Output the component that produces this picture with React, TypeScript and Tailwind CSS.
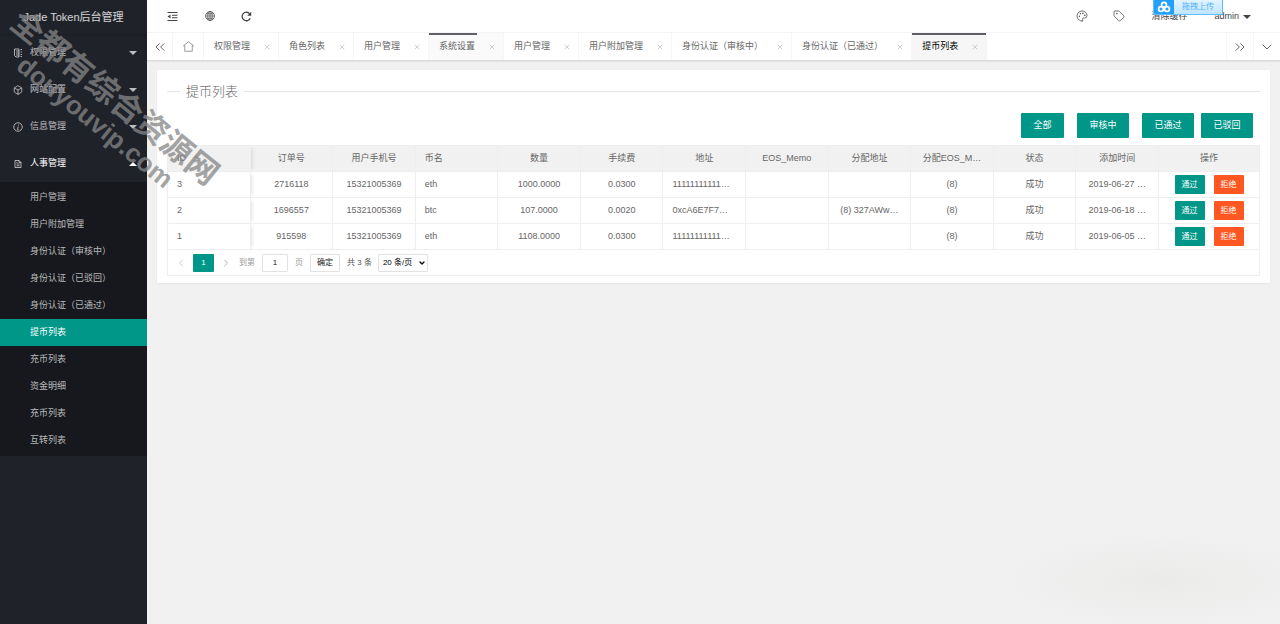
import { ChevronDown, ChevronLeft, ChevronRight, ChevronsLeft, ChevronsRight, Box, Palette, Tag, X } from "lucide-react";
import type { ReactNode } from "react";

interface Tab {
  label: string;
  state?: "hover" | "active";
}

interface Order {
  id: number;
  no: string;
  phone: string;
  coin: string;
  amount: string;
  fee: string;
  address: string;
  assigned: string;
  memo: string;
  time: string;
}

const TABS: Tab[] = [
  { label: "权限管理" },
  { label: "角色列表" },
  { label: "用户管理" },
  { label: "系统设置", state: "hover" },
  { label: "用户管理" },
  { label: "用户附加管理" },
  { label: "身份认证（审核中）" },
  { label: "身份认证（已通过）" },
  { label: "提币列表", state: "active" },
];

const SUBMENU = [
  "用户管理",
  "用户附加管理",
  "身份认证（审核中）",
  "身份认证（已驳回）",
  "身份认证（已通过）",
  "提币列表",
  "充币列表",
  "资金明细",
  "充币列表",
  "互转列表",
];
const CURRENT = 5;

const COLUMNS = ["订单号", "用户手机号", "币名", "数量", "手续费", "地址", "EOS_Memo", "分配地址", "分配EOS_M…", "状态", "添加时间"];

const ORDERS: Order[] = [
  { id: 3, no: "2716118", phone: "15321005369", coin: "eth", amount: "1000.0000", fee: "0.0300", address: "11111111111…", assigned: "", memo: "(8)", time: "2019-06-27 …" },
  { id: 2, no: "1696557", phone: "15321005369", coin: "btc", amount: "107.0000", fee: "0.0020", address: "0xcA6E7F7…", assigned: "(8) 327AWw…", memo: "(8)", time: "2019-06-18 …" },
  { id: 1, no: "915598", phone: "15321005369", coin: "eth", amount: "1108.0000", fee: "0.0300", address: "11111111111…", assigned: "", memo: "(8)", time: "2019-06-05 …" },
];

function GroupIcon({ name }: { name: string }) {
  if (name === "box") return <Box size={10} strokeWidth={2} />;
  if (name === "file") {
    return (
      <svg width="8" height="8" viewBox="0 0 16 16" fill="none" stroke="currentColor" strokeWidth="1.8" className="ml-px">
        <path d="M2 1h8l4 4v10H2zM10 1v4h4M5 8h6M5 11.500h6M5 5h2" />
      </svg>
    );
  }
  return (
    <svg width="10" height="10" viewBox="0 0 20 20" fill="none" stroke="currentColor" strokeWidth="1.8">
      {name === "grid" && (
        <>
          <path d="M3 2h9M3 2v13l3 3h6M6 6h6M6 10h6M6 14h6M12 2v16" />
          <path d="M15 3h3M15 8h3M15 13h3M15 17h3" />
        </>
      )}
      {name === "info" && (
        <>
          <circle cx="10" cy="10" r="8.5" />
          <path d="M11 5v2M10.500 9L9 15h2" />
        </>
      )}
    </svg>
  );
}

function Group({ icon, label, open }: { icon: string; label: string; open?: boolean }) {
  return (
    <a href="#" className={`flex h-[37px] items-center pt-px pr-[10px] pl-[13px] ${open ? "text-white" : "text-white/70"}`}>
      <span className="w-[17px] text-white/70">
        <GroupIcon name={icon} />
      </span>
      <span className="flex-1">{label}</span>
      <svg width="8" height="4" viewBox="0 0 8 4" fill="currentColor" className={open ? "rotate-180" : ""}>
        <path d="M0 0h8L4 4z" />
      </svg>
    </a>
  );
}

function Sidebar() {
  return (
    <aside className="w-[147px] shrink-0 bg-[#20222a]">
      <div className="flex h-[34px] items-center justify-center text-[11px] text-white/80 shadow-[0_1px_2px_rgba(0,0,0,0.15)]">
        Jade Token后台管理
      </div>
      <nav>
        <Group icon="grid" label="权限管理" />
        <Group icon="box" label="网站配置" />
        <Group icon="info" label="信息管理" />
        <Group icon="file" label="人事管理" open />
        <ul className="bg-[#16181d] py-[2px]">
          {SUBMENU.map((label, i) => (
            <li key={i}>
              <a href="#" className={`flex h-[27px] items-center pt-px pl-[30px] ${i === CURRENT ? "bg-[#009688] text-white" : "text-white/70"}`}>
                {label}
              </a>
            </li>
          ))}
        </ul>
      </nav>
    </aside>
  );
}

function IconButton({ label, children }: { label: string; children: ReactNode }) {
  return (
    <button type="button" aria-label={label} className="flex w-[37px] items-center justify-center">
      {children}
    </button>
  );
}

function TopBar() {
  return (
    <header className="flex h-[33px] items-stretch justify-between border-b border-[#f6f6f6] bg-white pr-[29px] pl-[7px] text-[#444]">
      <div className="flex">
        <IconButton label="侧边伸缩">
          <svg width="11" height="9" viewBox="0 0 22 18" fill="none" stroke="currentColor" strokeWidth="2">
            <path d="M1 1h20M10 6.500h11M10 11.500h11M1 17h20" />
            <path d="M7 5v8L1 9z" fill="currentColor" stroke="none" />
          </svg>
        </IconButton>
        <IconButton label="前台">
          <svg width="10" height="10" viewBox="0 0 20 20" fill="none" stroke="currentColor" strokeWidth="1.4">
            <circle cx="10" cy="10" r="9" />
            <ellipse cx="10" cy="10" rx="4.500" ry="9" />
            <path d="M10 1v18M1 10h18M2.500 5.500h15M2.500 14.500h15" />
          </svg>
        </IconButton>
        <IconButton label="刷新">
          <svg width="11" height="11" viewBox="0 0 22 22" fill="none" stroke="currentColor" strokeWidth="2.6">
            <path d="M18.5 14.5a8.5 8.5 0 1 1-1.2-9" />
            <path d="M20.500 1.500v8h-8z" fill="currentColor" stroke="none" />
          </svg>
        </IconButton>
      </div>
      <div className="flex">
        <IconButton label="主题">
          <Palette size={12} strokeWidth={1.5} />
        </IconButton>
        <IconButton label="便签">
          <Tag size={12} strokeWidth={1.5} />
        </IconButton>
        <button type="button" className="px-[14px] pt-px">清除缓存</button>
        <button type="button" className="flex items-center gap-1 pt-px pl-[13px]">
          admin
          <svg width="8" height="4" viewBox="0 0 8 4" fill="currentColor">
            <path d="M0 0h8L4 4z" />
          </svg>
        </button>
      </div>
    </header>
  );
}

function TabBar() {
  return (
    <div className="relative flex h-[27px] items-stretch bg-white text-[#666] shadow-[0_1px_2px_rgba(0,0,0,0.15)]">
      <button type="button" aria-label="向左" className="flex w-[26px] items-center justify-center border-r border-[#f6f6f6]">
        <ChevronsLeft size={16} strokeWidth={1.5} />
      </button>
      <a href="#" aria-label="主页" className="flex w-[31px] items-center justify-center border-r border-[#f6f6f6]">
        <svg width="11" height="11" viewBox="0 0 22 22" fill="none" stroke="currentColor" strokeWidth="1.3">
          <path d="M11 1.500L21 9.500h-2.500V20.500h-15V9.500H1z" />
        </svg>
      </a>
      <ul className="flex flex-1">
        {TABS.map((tab, i) => (
          <li
            key={i}
            className={`relative flex items-center border-r border-[#f6f6f6] pt-px pr-[7px] pl-[10px] ${
              tab.state === "active" ? "bg-[#f6f6f6] text-black" : tab.state === "hover" ? "bg-[#fafafa]" : ""
            }`}
          >
            {tab.state && <span className={`absolute top-0 left-0 h-[2px] bg-[#5f5f66] ${tab.state === "active" ? "w-full" : "w-12"}`} />}
            <a href="#">{tab.label}</a>
            <button type="button" aria-label={`关闭${tab.label}`} className="ml-[13px] text-[#b8b8b8]">
              <X size={8} strokeWidth={2} />
            </button>
          </li>
        ))}
      </ul>
      <button type="button" aria-label="向右" className="flex w-[27px] items-center justify-center border-l border-[#f6f6f6]">
        <ChevronsRight size={16} strokeWidth={1.5} />
      </button>
      <button type="button" aria-label="更多" className="flex w-[27px] items-center justify-center border-l border-[#f6f6f6]">
        <ChevronDown size={16} strokeWidth={1.5} />
      </button>
    </div>
  );
}

const filterClass = "h-[25px] w-[52px] rounded-[1px] bg-[#009688] text-white";
const cellClass = "h-[26px] truncate border-r border-b border-[#eee] px-[9px] text-center font-normal";
const fixedClass = "h-[26px] border-r border-b border-[#eee] px-[9px] text-left font-normal shadow-[4px_0_4px_-3px_rgba(0,0,0,0.12)]";

function OrderTable() {
  return (
    <table className="w-full table-fixed border-separate border-spacing-0 border-t border-l border-[#eee]">
      <colgroup>
        <col />
        {COLUMNS.map((c) => (
          <col key={c} />
        ))}
        <col className="w-[101px]" />
      </colgroup>
      <thead className="bg-[#f1f1f1]">
        <tr>
          <th className={fixedClass}>
            <span className="flex items-center gap-[7px]">
              ID
              <svg width="6" height="8" viewBox="0 0 6 8" fill="#b2b2b2">
                <path d="M3 0l3 3H0zM0 5h6L3 8z" />
              </svg>
            </span>
          </th>
          {COLUMNS.map((c) => (
            <th key={c} className={`${cellClass} ${c === "币名" ? "text-left!" : ""}`}>{c}</th>
          ))}
          <th className={cellClass}>操作</th>
        </tr>
      </thead>
      <tbody>
        {ORDERS.map((o) => (
          <tr key={o.id}>
            <td className={fixedClass}>{o.id}</td>
            <td className={cellClass}>{o.no}</td>
            <td className={cellClass}>{o.phone}</td>
            <td className={`${cellClass} text-left!`}>{o.coin}</td>
            <td className={cellClass}>{o.amount}</td>
            <td className={cellClass}>{o.fee}</td>
            <td className={`${cellClass} text-left!`}>{o.address}</td>
            <td className={cellClass} />
            <td className={cellClass}>{o.assigned}</td>
            <td className={cellClass}>{o.memo}</td>
            <td className={cellClass}>成功</td>
            <td className={cellClass}>{o.time}</td>
            <td className={cellClass}>
              <div className="flex justify-center gap-[9px] text-[8px] text-white">
                <button type="button" className="h-[19px] rounded-[1px] bg-[#009688] px-[7px]">通过</button>
                <button type="button" className="h-[19px] rounded-[1px] bg-[#ff5722] px-[7px]">拒绝</button>
              </div>
            </td>
          </tr>
        ))}
      </tbody>
    </table>
  );
}

function Pager() {
  return (
    <div className="flex h-[26px] items-center border-x border-b border-[#eee] pl-[6px] text-[8px] text-[#999]">
      <button type="button" aria-label="上一页" className="flex w-[19px] justify-start pl-px text-[#bbb]">
        <ChevronLeft size={12} strokeWidth={1.5} />
      </button>
      <button type="button" className="h-[18px] w-[21px] rounded-[1px] bg-[#009688] text-white">1</button>
      <button type="button" aria-label="下一页" className="ml-[6px] text-[#999]">
        <ChevronRight size={12} strokeWidth={1.5} />
      </button>
      <label htmlFor="page" className="ml-[7px]">到第</label>
      <input id="page" defaultValue="1" className="mx-[7px] h-[18px] w-[26px] rounded-[1px] border border-[#e2e2e2] text-center text-[#222]" />
      <span>页</span>
      <button type="button" className="ml-[7px] h-[18px] rounded-[1px] border border-[#e2e2e2] px-[6px] text-[#222]">确定</button>
      <span className="ml-[7px] text-[#555]">共 3 条</span>
      <div className="relative ml-[6px]">
        <select aria-label="每页条数" className="block h-[18px] w-[50px] appearance-none rounded-[1px] border border-[#e2e2e2] bg-white pl-[4px] text-black">
          <option>20 条/页</option>
        </select>
        <ChevronDown size={8} strokeWidth={4} className="pointer-events-none absolute top-[5px] right-[2px] text-black" />
      </div>
    </div>
  );
}

function UploadBadge() {
  return (
    <button type="button" className="absolute top-0 right-[57px] flex h-[15px] w-[70px] items-center overflow-hidden rounded-b-[2px] border border-t-0 border-[#5fbcff] bg-linear-to-b from-[#e3f4ff] to-[#bfe5ff] text-[8px] text-[#53b2fb]">
      <span className="flex h-full w-[20px] items-center justify-center bg-[#22a0fb]">
        <svg width="14" height="12" viewBox="0 0 28 24" fill="none" stroke="white" strokeWidth="3.500">
          <circle cx="14" cy="7.500" r="4.800" />
          <circle cx="8" cy="16" r="4.800" />
          <circle cx="20" cy="16" r="4.800" />
        </svg>
      </span>
      <span className="flex-1">拖拽上传</span>
    </button>
  );
}

function Watermark() {
  return (
    <div className="pointer-events-none absolute top-1 left-[26px] origin-top-left rotate-[39deg] font-bold whitespace-nowrap text-[#868686]/75">
      <div className="text-[32px] leading-[34px]">全都有综合资源网</div>
      <div className="pl-8 text-[26px] leading-7">douyouvip.com</div>
    </div>
  );
}

export default function App() {
  return (
    <div className="relative flex min-h-screen overflow-hidden bg-[#f1f1f1] font-['Liberation_Sans','Noto_Sans_CJK_SC',sans-serif] text-[9px] text-[#666]">
      <Sidebar />
      <div className="min-w-0 flex-1 bg-[radial-gradient(170px_50px_at_calc(100%-120px)_calc(100%-44px),#ebebea,#f1f1f1)]">
        <TopBar />
        <TabBar />
        <main className="p-[10px]">
          <section className="rounded-[1px] bg-white px-[10px] pt-[11px] pb-[7px] shadow-[0_1px_2px_rgba(0,0,0,0.05)]">
            <div className="flex items-center gap-[6px]">
              <span className="h-px w-[13px] bg-[#e6e6e6]" />
              <h1 className="pt-px text-[13px] leading-5 font-light">提币列表</h1>
              <span className="h-px flex-1 bg-[#e6e6e6]" />
            </div>
            <div className="mt-[11px] mb-[7px] flex justify-end gap-[13px] pr-[7px]">
              <button type="button" className="h-[25px] w-[43px] rounded-[1px] bg-[#009688] text-white">全部</button>
              <button type="button" className={filterClass}>审核中</button>
              <div className="flex gap-[7px]">
                <button type="button" className={filterClass}>已通过</button>
                <button type="button" className={filterClass}>已驳回</button>
              </div>
            </div>
            <OrderTable />
            <Pager />
          </section>
        </main>
      </div>
      <UploadBadge />
      <Watermark />
    </div>
  );
}
